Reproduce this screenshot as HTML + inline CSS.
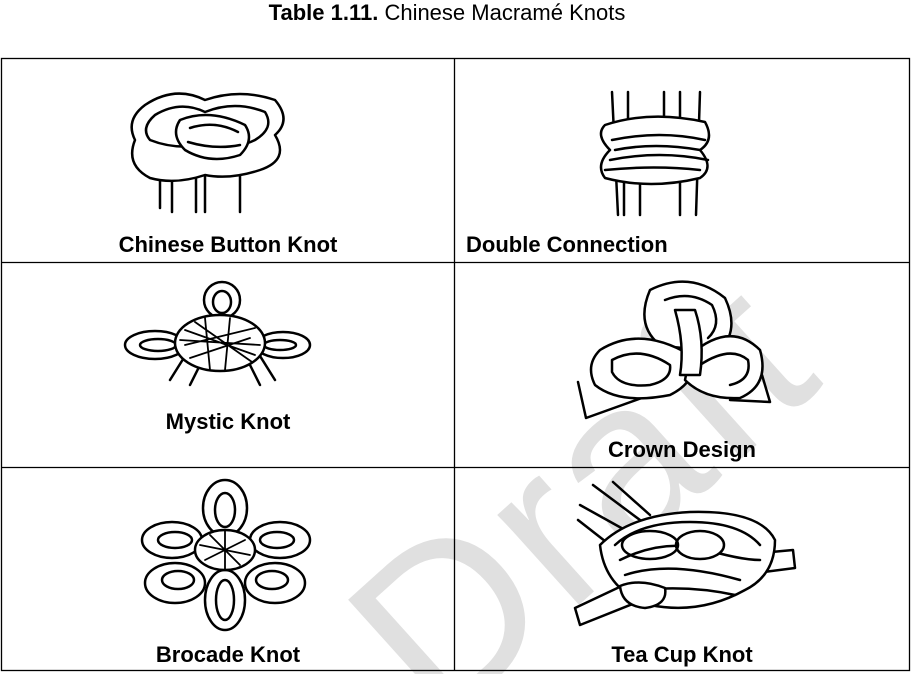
<!DOCTYPE html>
<html><head><meta charset="utf-8"><style>
html,body{margin:0;padding:0;background:#fff;width:912px;height:674px;overflow:hidden}
svg{position:absolute;left:0;top:0}
</style></head><body>
<svg width="912" height="674" viewBox="0 0 912 674" xmlns="http://www.w3.org/2000/svg" font-family="Liberation Sans, sans-serif">
<text x="447" y="20" font-size="22" text-anchor="middle"><tspan font-weight="bold">Table 1.11.</tspan> Chinese Macramé Knots</text>
<!-- watermark -->
<text transform="translate(440,730) rotate(-42)" font-size="230" fill="#e0e0e0" letter-spacing="5">Draft</text>
<!-- table -->
<g stroke="#000" stroke-width="1.3" fill="none">
<rect x="1.5" y="58.5" width="908" height="612"/>
<line x1="454.5" y1="58" x2="454.5" y2="671"/>
<line x1="1" y1="262.5" x2="910" y2="262.5"/>
<line x1="1" y1="467.5" x2="910" y2="467.5"/>
</g>
<g font-size="22" font-weight="bold">
<text x="228" y="252" text-anchor="middle">Chinese Button Knot</text>
<text x="466" y="252">Double Connection</text>
<text x="228" y="429" text-anchor="middle">Mystic Knot</text>
<text x="682" y="457" text-anchor="middle">Crown Design</text>
<text x="228" y="662" text-anchor="middle">Brocade Knot</text>
<text x="682" y="662" text-anchor="middle">Tea Cup Knot</text>
</g>
<g stroke="#000" stroke-width="2.5" fill="#fff" stroke-linecap="round" stroke-linejoin="round">
<!-- Chinese button knot -->
<path d="M160 170 L160 208 M172 172 L172 212 M196 175 L196 212 M205 175 L205 212 M240 172 L240 212" fill="none"/>
<path d="M145 105 Q175 85 205 100 Q240 88 275 100 Q292 120 275 135 Q290 160 260 170 Q230 180 205 175 Q175 185 150 178 Q125 165 135 140 Q125 120 145 105Z"/>
<path d="M155 115 Q180 100 205 112 Q235 100 265 112 Q275 128 255 140 Q235 150 205 145 Q175 150 150 140 Q140 128 155 115Z" fill="none"/>
<path d="M180 120 Q210 108 245 125 Q255 140 240 155 Q210 165 185 150 Q170 135 180 120Z"/>
<path d="M190 128 Q215 120 238 132 M188 142 Q215 150 240 145" fill="none"/>
<!-- Double connection -->
<path d="M612 92 L618 215 M628 92 L628 130 M664 92 L664 130 M680 92 L680 130 M700 92 L696 215 M624 175 L624 215 M640 180 L640 215 M680 180 L680 215" fill="none"/>
<path d="M605 125 Q650 110 705 122 Q715 140 700 150 Q715 168 700 178 Q650 190 605 178 Q595 165 610 150 Q595 135 605 125Z"/>
<path d="M612 140 Q660 130 705 140 M610 160 Q660 150 708 160 M615 150 Q655 142 700 150 M605 170 Q655 165 700 170" fill="none"/>
<!-- Mystic knot -->
<path d="M195 340 L170 380 M250 340 L275 380 M210 345 L190 385 M240 345 L260 385" fill="none"/>
<ellipse cx="222" cy="300" rx="18" ry="18"/>
<ellipse cx="222" cy="302" rx="9" ry="11"/>
<ellipse cx="155" cy="345" rx="30" ry="14"/>
<ellipse cx="158" cy="345" rx="18" ry="6"/>
<ellipse cx="283" cy="345" rx="27" ry="13"/>
<ellipse cx="280" cy="345" rx="16" ry="5"/>
<ellipse cx="220" cy="343" rx="45" ry="28"/>
<path d="M185 330 L255 355 M185 345 L255 328 M190 358 L250 338 M195 322 L252 362 M180 340 L260 345 M205 318 L210 370 M230 318 L225 370" fill="none" stroke-width="1.8"/>
<!-- Crown design -->
<path d="M578 382 L586 418 L650 395 M762 375 L770 402 L730 400" fill="none"/>
<path d="M650 290 Q690 270 725 298 Q740 330 720 350 Q690 350 660 345 Q635 325 650 290Z"/>
<path d="M665 300 Q690 290 712 305 Q722 325 708 338" fill="none"/>
<path d="M600 350 Q640 325 690 355 Q700 380 670 395 Q620 405 595 385 Q585 365 600 350Z"/>
<path d="M612 360 Q640 345 670 365 Q672 380 650 385 Q620 388 612 372Z" fill="none"/>
<path d="M690 355 Q730 320 760 350 Q770 385 740 398 Q705 400 685 380Z"/>
<path d="M700 365 Q730 345 748 360 Q752 380 730 385" fill="none"/>
<path d="M675 310 Q685 345 680 375 L700 375 Q705 340 695 310Z"/>
<!-- Brocade knot -->
<ellipse cx="225" cy="508" rx="22" ry="28"/><ellipse cx="225" cy="510" rx="10" ry="17"/>
<ellipse cx="172" cy="540" rx="30" ry="18"/><ellipse cx="175" cy="540" rx="17" ry="8"/>
<ellipse cx="280" cy="540" rx="30" ry="18"/><ellipse cx="277" cy="540" rx="17" ry="8"/>
<ellipse cx="175" cy="583" rx="30" ry="20"/><ellipse cx="178" cy="580" rx="16" ry="9"/>
<ellipse cx="275" cy="583" rx="30" ry="20"/><ellipse cx="272" cy="580" rx="16" ry="9"/>
<ellipse cx="225" cy="600" rx="20" ry="30"/><ellipse cx="225" cy="600" rx="9" ry="20"/>
<ellipse cx="225" cy="550" rx="30" ry="20"/>
<path d="M200 545 L250 555 M205 560 L245 540 M225 530 L225 570 M210 535 L240 565" fill="none" stroke-width="1.8"/>
<!-- Tea cup knot -->
<path d="M593 485 L640 520 M613 482 L650 515 M580 505 L625 530 M578 520 L610 545" fill="none"/>
<path d="M575 608 L645 575 L655 595 L580 625Z"/>
<path d="M740 555 L793 550 L795 568 L740 575Z"/>
<path d="M600 545 Q630 515 690 512 Q760 510 775 540 Q775 575 745 590 Q700 615 650 605 Q605 590 600 545Z"/>
<path d="M615 545 Q640 522 690 522 Q740 522 760 545 M620 560 Q660 540 700 548 Q740 560 760 560 M625 575 Q670 560 740 580 M640 590 Q690 585 735 595" fill="none"/>
<ellipse cx="700" cy="545" rx="24" ry="14"/>
<ellipse cx="650" cy="545" rx="28" ry="14" fill="none"/>
<path d="M620 586 Q640 578 665 588 Q668 605 645 608 Q622 606 620 586Z"/>
</g>
</svg>
</body></html>
